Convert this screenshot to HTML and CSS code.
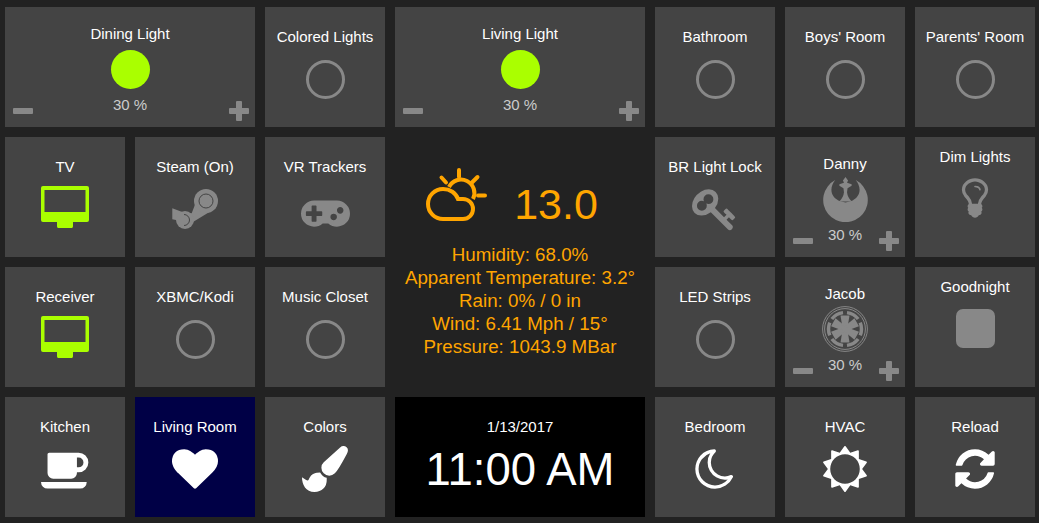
FILE: index.html
```html
<!DOCTYPE html>
<html lang="en">
  <head>
    <meta charset="utf-8" />
    <title>Home Panel</title>
    <link rel="stylesheet" href="styles.css">
  </head>

  <body>
    <div class="panel">
      <!-- row 1 -->
      <div class="tile tile_dimmer tile_wide">
        <div class="tile__title">Dining Light</div>
        <div class="tile__icon"><span class="bulb bulb_on"></span></div>
        <div class="tile__level">30 %</div>
        <span class="dim dim_minus"></span>
        <span class="dim dim_plus"></span>
      </div>
      <div class="tile">
        <div class="tile__title">Colored Lights</div>
        <div class="tile__icon"><span class="bulb"></span></div>
      </div>
      <div class="tile tile_dimmer tile_wide">
        <div class="tile__title">Living Light</div>
        <div class="tile__icon"><span class="bulb bulb_on"></span></div>
        <div class="tile__level">30 %</div>
        <span class="dim dim_minus"></span>
        <span class="dim dim_plus"></span>
      </div>
      <div class="tile">
        <div class="tile__title">Bathroom</div>
        <div class="tile__icon"><span class="bulb"></span></div>
      </div>
      <div class="tile">
        <div class="tile__title">Boys' Room</div>
        <div class="tile__icon"><span class="bulb"></span></div>
      </div>
      <div class="tile">
        <div class="tile__title">Parents' Room</div>
        <div class="tile__icon"><span class="bulb"></span></div>
      </div>

      <!-- row 2 -->
      <div class="tile">
        <div class="tile__title">TV</div>
        <div class="tile__icon">
          <svg class="icon_green icon_high" width="48" height="42" viewBox="0 0 48 42"><path fill-rule="evenodd" d="M2 0h44a2 2 0 0 1 2 2v32a2 2 0 0 1-2 2H32v4a2 2 0 0 1-1 2H17a2 2 0 0 1-1-2v-4H2a2 2 0 0 1-2-2V2a2 2 0 0 1 2-2zM3.500 4v22h41V4z"/></svg>
        </div>
      </div>
      <div class="tile">
        <div class="tile__title">Steam (On)</div>
        <div class="tile__icon">
          <svg class="icon_grey" width="46" height="46" viewBox="0 0 46 46">
            <path d="M.3 22.300 13 27l6.700.3L26 10.700 44 22 21 36l-12-1-8.700-1.700z"/>
            <circle cx="34" cy="15" r="12"/>
            <circle cx="13" cy="34" r="9"/>
            <circle class="cut" cx="34" cy="15" r="7"/>
            <path class="cut" d="M12 28.500a5.500 5.500 0 0 1 0 11"/>
          </svg>
        </div>
      </div>
      <div class="tile">
        <div class="tile__title">VR Trackers</div>
        <div class="tile__icon">
          <svg class="icon_grey icon_low" width="49" height="46" viewBox="0 0 1920 1792"><path d="M832 1024v-128q0-14-9-23t-23-9h-192v-192q0-14-9-23t-23-9h-128q-14 0-23 9t-9 23v192h-192q-14 0-23 9t-9 23v128q0 14 9 23t23 9h192v192q0 14 9 23t23 9h128q14 0 23-9t9-23v-192h192q14 0 23-9t9-23zm576 64q0-53-37.500-90.500t-90.500-37.500-90.500 37.500-37.500 90.500 37.500 90.500 90.500 37.500 90.500-37.500 37.500-90.500zm256-256q0-53-37.500-90.500t-90.500-37.500-90.500 37.500-37.500 90.500 37.500 90.500 90.500 37.500 90.500-37.500 37.500-90.500zm256 128q0 212-150 362t-362 150q-192 0-338-128h-220q-146 128-338 128-212 0-362-150t-150-362 150-362 362-150h896q212 0 362 150t150 362z"/></svg>
        </div>
      </div>

      <!-- weather, two columns and two rows -->
      <div class="weather">
        <div class="weather__now">
          <svg class="weather__icon" width="62" height="56" viewBox="426 167 62 56">
            <path d="M443 219a15 15 0 0 1 0-30c7 0 13 4 15 10h5a10 10 0 0 1 0 20z"/>
            <path d="M449 187a12.500 12.500 0 0 1 24 12"/>
            <path class="weather__ray" d="M459 170v7M441.500 177.500l4.500 5M477.500 177l-5.500 5.500M478 195.500h7"/>
          </svg>
          <div class="weather__temp">13.0</div>
        </div>
        <div class="weather__line">Humidity: 68.0%</div>
        <div class="weather__line">Apparent Temperature: 3.2°</div>
        <div class="weather__line">Rain: 0% / 0 in</div>
        <div class="weather__line">Wind: 6.41 Mph / 15°</div>
        <div class="weather__line">Pressure: 1043.9 MBar</div>
      </div>

      <div class="tile">
        <div class="tile__title">BR Light Lock</div>
        <div class="tile__icon">
          <svg class="icon_grey" width="46" height="46" viewBox="0 0 1792 1792"><path d="M832 512q0-80-56-136t-136-56-136 56-56 136q0 42 19 83-41-19-83-19-80 0-136 56t-56 136 56 136 136 56 136-56 56-136q0-42-19-83 41 19 83 19 80 0 136-56t56-136zm851 704q0 17-49 66t-66 49q-9 0-28.500-16t-36.500-33-38.500-40-24.500-26l-96 96 220 220q28 28 28 68 0 42-39 81t-81 39q-40 0-68-28l-671-671q-176 131-365 131-163 0-265.500-102.500t-102.500-265.500q0-160 95-313t248-248 313-95q163 0 265.500 102.500t102.500 265.500q0 189-131 365l355 355 96-96q-3-3-26-24.500t-40-38.500-33-36.500-16-28.500q0-17 49-66t66-49q13 0 23 10 6 6 46 44.500t82 79.500 86.500 86 73 78 28.500 41z"/></svg>
        </div>
      </div>
      <div class="tile tile_dimmer">
        <div class="tile__title">Danny</div>
        <div class="tile__icon">
          <svg class="icon_grey" width="45" height="45" viewBox="0 0 44 44">
            <path d="M12 3A21.800 21.800 0 1 0 32 3c5 6 6 15-3 20-2 1-4 1-7 2-3-1-5-1-7-2-9-5-8-14-3-20z"/>
            <path d="M22 0l2.500 3.500-1 2 4.500 1.500v1.500l-4 2.500-.5 4q.5 5 4.500 9H16q4-4 4.500-9l-.5-4-4-2.500V7l4.500-1.500-1-2z"/>
          </svg>
        </div>
        <div class="tile__level">30 %</div>
        <span class="dim dim_minus"></span>
        <span class="dim dim_plus"></span>
      </div>
      <div class="tile tile_scene">
        <div class="tile__title">Dim Lights</div>
        <div class="tile__icon">
          <svg class="icon_grey" width="46" height="46" viewBox="0 0 1792 1792"><path d="M1120 576q0 13-9.500 22.500t-22.500 9.500-22.500-9.500-9.500-22.500q0-46-54-71t-106-25q-13 0-22.500-9.500t-9.500-22.500 9.500-22.500 22.500-9.500q50 0 99.500 16t87 54 37.500 90zm160 0q0-72-34.500-134t-90-101.500-123-62-136.500-22.500-136.500 22.500-123 62-90 101.500-34.500 134q0 101 68 180 10 11 30.500 33t30.500 33q128 153 141 298h228q13-145 141-298 10-11 30.500-33t30.500-33q68-79 68-180zm128 0q0 155-103 268-45 49-74.500 87t-59.500 95.500-34 107.500q47 28 47 82 0 37-25 64 25 27 25 64 0 52-45 81 13 23 13 47 0 46-31.500 71t-77.500 25q-20 44-60 70t-87 26-87-26-60-70q-46 0-77.500-25t-31.500-71q0-24 13-47-45-29-45-81 0-37 25-64-25-27-25-64 0-54 47-82-4-50-34-107.500t-59.500-95.500-74.500-87q-103-113-103-268 0-99 44.500-184.500t117-142 164-89 186.500-32.500 186.500 32.500 164 89 117 142 44.500 184.500z"/></svg>
        </div>
      </div>

      <!-- row 3 -->
      <div class="tile">
        <div class="tile__title">Receiver</div>
        <div class="tile__icon">
          <svg class="icon_green icon_high" width="48" height="42" viewBox="0 0 48 42"><path fill-rule="evenodd" d="M2 0h44a2 2 0 0 1 2 2v32a2 2 0 0 1-2 2H32v4a2 2 0 0 1-1 2H17a2 2 0 0 1-1-2v-4H2a2 2 0 0 1-2-2V2a2 2 0 0 1 2-2zM3.500 4v22h41V4z"/></svg>
        </div>
      </div>
      <div class="tile">
        <div class="tile__title">XBMC/Kodi</div>
        <div class="tile__icon"><span class="bulb"></span></div>
      </div>
      <div class="tile">
        <div class="tile__title">Music Closet</div>
        <div class="tile__icon"><span class="bulb"></span></div>
      </div>
      <div class="tile">
        <div class="tile__title">LED Strips</div>
        <div class="tile__icon"><span class="bulb"></span></div>
      </div>
      <div class="tile tile_dimmer">
        <div class="tile__title">Jacob</div>
        <div class="tile__icon">
          <svg class="icon_grey" width="46" height="46" viewBox="-23 -23 46 46">
            <circle class="empire__ring" r="22.400"/>
            <circle class="empire__ring" r="20.400"/>
            <circle class="empire__band" r="16.500" pathLength="60" stroke-dasharray="7.600 2.400" stroke-dashoffset="3.800"/>
            <circle r="6"/>
            <path class="empire__spoke" d="M-1.500-5h3L4.500 13.500h-9z"/>
            <path class="empire__spoke" d="M-1.500-5h3L4.500 13.500h-9z" transform="rotate(60)"/>
            <path class="empire__spoke" d="M-1.500-5h3L4.500 13.500h-9z" transform="rotate(120)"/>
            <path class="empire__spoke" d="M-1.500-5h3L4.500 13.500h-9z" transform="rotate(180)"/>
            <path class="empire__spoke" d="M-1.500-5h3L4.500 13.500h-9z" transform="rotate(240)"/>
            <path class="empire__spoke" d="M-1.500-5h3L4.500 13.500h-9z" transform="rotate(300)"/>
          </svg>
        </div>
        <div class="tile__level">30 %</div>
        <span class="dim dim_minus"></span>
        <span class="dim dim_plus"></span>
      </div>
      <div class="tile tile_scene">
        <div class="tile__title">Goodnight</div>
        <div class="tile__icon"><span class="stop"></span></div>
      </div>

      <!-- row 4 -->
      <div class="tile">
        <div class="tile__title">Kitchen</div>
        <div class="tile__icon">
          <svg width="49" height="46" viewBox="-64 0 1920 1792"><path d="M1600 640q0-80-56-136t-136-56h-64v384h64q80 0 136-56t56-136zm-1664 768h1792q0 106-75 181t-181 75h-1280q-106 0-181-75t-75-181zm1856-768q0 159-112.500 271.500t-271.500 112.500h-64v32q0 92-66 158t-158 66h-704q-92 0-158-66t-66-158v-736q0-26 19-45t45-19h1152q159 0 271.500 112.500t112.500 271.500z"/></svg>
        </div>
      </div>
      <div class="tile tile_active">
        <div class="tile__title">Living Room</div>
        <div class="tile__icon">
          <svg width="46" height="46" viewBox="0 0 1792 1792"><path d="M896 1664q-26 0-44-18l-624-602q-10-8-27.500-26t-55.500-65.500-68-97.500-53.500-121-23.500-138q0-220 127-344t351-124q62 0 126.500 21.500t120 58 95.500 68.500 76 68q36-36 76-68t95.500-68.500 120-58 126.500-21.500q224 0 351 124t127 344q0 221-229 450l-623 600q-18 18-44 18z"/></svg>
        </div>
      </div>
      <div class="tile">
        <div class="tile__title">Colors</div>
        <div class="tile__icon">
          <svg width="46" height="46" viewBox="0 0 1792 1792"><path d="M1615 0q70 0 122.500 46.500t52.500 116.500q0 63-45 151-332 629-465 752-97 91-218 91-126 0-216.500-92.500t-90.500-219.500q0-128 92-212l638-579q59-54 130-54zm-909 1034q39 76 106.500 130t150.500 76l1 71q4 213-129.500 347t-348.500 134q-123 0-218-46.500t-152.500-127.500-86.500-183-29-220q7 5 41 30t62 44.500 59 36.500 46 17q41 0 55-37 25-66 57.500-112.500t69.500-76 88-47.500 103-25.500 125-10.500z"/></svg>
        </div>
      </div>

      <div class="clock">
        <div class="clock__date">1/13/2017</div>
        <div class="clock__time">11:00 AM</div>
      </div>

      <div class="tile">
        <div class="tile__title">Bedroom</div>
        <div class="tile__icon">
          <svg width="46" height="46" viewBox="0 0 1792 1792"><path d="M1390 1303q-54 9-110 9-182 0-337-90t-245-245-90-337q0-192 104-357-201 60-328.500 229t-127.500 384q0 130 51 248.500t136.500 204 204 136.500 248.500 51q144 0 273.500-61.500t220.500-171.500zm203-85q-94 203-283.500 324.500t-413.500 121.500q-156 0-298-61t-245-164-164-245-61-298q0-153 57.500-292.500t156-241.500 235.500-164.500 290-68.500q44-2 61 39 18 41-15 72-86 78-131.500 181.500t-45.500 218.500q0 148 73 273t198 198 273 73q118 0 228-51 41-18 72 13 14 14 17.500 34t-4.500 38z"/></svg>
        </div>
      </div>
      <div class="tile">
        <div class="tile__title">HVAC</div>
        <div class="tile__icon">
          <svg width="46" height="46" viewBox="0 0 1792 1792"><path d="M1472 896q0-117-45.500-223.500t-123-184-184-123-223.500-45.500-223.500 45.500-184 123-123 184-45.500 223.500 45.500 223.500 123 184 184 123 223.500 45.500 223.500-45.500 184-123 123-184 45.500-223.500zm276 277q-4 15-20 20l-292 96v306q0 16-13 26-15 10-29 4l-292-94-180 248q-10 13-26 13t-26-13l-180-248-292 94q-14 6-29-4-13-10-13-26v-306l-292-96q-16-5-20-20-5-17 4-29l180-248-180-248q-9-13-4-29 4-15 20-20l292-96v-306q0-16 13-26 15-10 29-4l292 94 180-248q9-12 26-12t26 12l180 248 292-94q14-6 29 4 13 10 13 26v306l292 96q16 5 20 20 5 16-4 29l-180 248 180 248q9 12 4 29z"/></svg>
        </div>
      </div>
      <div class="tile">
        <div class="tile__title">Reload</div>
        <div class="tile__icon">
          <svg width="46" height="46" viewBox="0 0 1792 1792"><path d="M1639 1056q0 5-1 7-64 268-268 434.500t-478 166.500q-146 0-282.500-55t-243.500-157l-129 129q-19 19-45 19t-45-19-19-45v-448q0-26 19-45t45-19h448q26 0 45 19t19 45-19 45l-137 137q71 66 161 102t187 36q134 0 250-65t186-179q11-17 53-117 8-23 30-23h192q13 0 22.500 9.500t9.500 22.500zm25-800v448q0 26-19 45t-45 19h-448q-26 0-45-19t-19-45 19-45l138-138q-148-137-349-137-134 0-250 65t-186 179q-11 17-53 117-8 23-30 23h-199q-13 0-22.500-9.500t-9.500-22.500v-7q65-268 270-434.500t480-166.500q146 0 284 55.500t245 156.500l130-129q19-19 45-19t45 19 19 45z"/></svg>
        </div>
      </div>
    </div>
  </body>
</html>
```

FILE: styles.css
```css
html,
body {
  height: 100%;
}

body {
  margin: 0;
  overflow: hidden;
  font-family: "Liberation Sans", Arial, sans-serif;
  font-size: 15px;
  color: #fff;
  background: #222;
}

.panel {
  display: grid;
  grid-template-columns: repeat(8, 120px);
  grid-auto-rows: 120px;
  gap: 10px;
  padding: 7px 5px;
}

/* tiles */
.tile {
  position: relative;
  display: flex;
  flex-direction: column;
  align-items: center;
  padding-top: 21px;
  box-sizing: border-box;
  background: #444;
}

.tile_wide {
  grid-column: span 2;
}

.tile_active {
  background: #000046;
}

.tile__title {
  height: 17px;
  line-height: 17px;
  white-space: nowrap;
}

.tile__icon {
  display: flex;
  align-items: center;
  justify-content: center;
  height: 46px;
  margin-top: 11px;
}

.tile__icon svg {
  display: block;
  flex: none;
  fill: #fff;
}

.tile__level {
  height: 17px;
  margin-top: 4px;
  line-height: 17px;
  color: #ccc;
}

.tile_dimmer {
  padding-top: 18px;
}

.tile_dimmer .tile__icon {
  margin-top: 4px;
}

.tile_scene {
  padding-top: 11px;
}

.tile_scene .tile__icon {
  margin-top: 10px;
}

.tile__icon .icon_green {
  fill: #aaff00;
}

.tile__icon .icon_grey {
  fill: #888;
}

.tile__icon .icon_low {
  margin-top: 6px;
}

.tile__icon .icon_high {
  margin-bottom: 4px;
}

.cut {
  fill: none;
  stroke: #444;
  stroke-width: 1;
}

/* switches */
.bulb {
  width: 39px;
  height: 39px;
  box-sizing: border-box;
  border: 3px solid #888;
  border-radius: 50%;
}

.bulb_on {
  border: 0;
  background: #aaff00;
}

.stop {
  width: 39px;
  height: 39px;
  border-radius: 7px;
  background: #888;
}

/* dimmer buttons lie over the corners of the tile */
.dim {
  position: absolute;
  width: 20px;
  height: 20px;
  bottom: 6px;
}

.dim_minus {
  left: 8px;
}

.dim_plus {
  right: 6px;
}

.dim::before,
.dim_plus::after {
  content: "";
  position: absolute;
  border-radius: 1px;
  background: #888;
}

.dim::before {
  left: 0;
  top: 7px;
  width: 20px;
  height: 6px;
}

.dim_plus::after {
  left: 7px;
  top: 0;
  width: 6px;
  height: 20px;
}

/* empire icon */
.empire__ring {
  fill: none;
  stroke: #888;
  stroke-width: 1;
}

.empire__band {
  fill: none;
  stroke: #888;
  stroke-width: 3.5;
}

/* weather */
.weather {
  grid-column: span 2;
  grid-row: span 2;
  display: flex;
  flex-direction: column;
  align-items: center;
  color: orange;
  font-size: 18.750px;
}

.weather__now {
  display: flex;
  align-items: center;
  gap: 26px;
  height: 100px;
  margin-top: 17px;
  margin-right: 16px;
  margin-bottom: -11px;
}

.weather__icon {
  margin-bottom: 18px;
  fill: none;
  stroke: orange;
  stroke-width: 4;
}

.weather__ray {
  stroke-linecap: round;
}

.weather__temp {
  font-size: 43px;
  line-height: 48px;
}

.weather__line {
  height: 23px;
  line-height: 23px;
  white-space: nowrap;
}

/* clock */
.clock {
  grid-column: span 2;
  display: flex;
  flex-direction: column;
  align-items: center;
  padding-top: 21px;
  box-sizing: border-box;
  background: #000;
}

.clock__date {
  height: 17px;
  line-height: 17px;
}

.clock__time {
  margin-top: 9px;
  line-height: 52px;
  font-size: 45.500px;
}
```
